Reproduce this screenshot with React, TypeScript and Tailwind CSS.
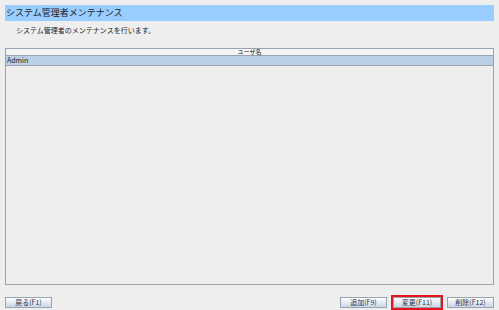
export default function App() {
	return (
		<div
			className="flex h-[310px] w-[499px] flex-col bg-[#eeeeee] text-[#222]"
			style={{ fontFamily: '"Noto Sans CJK JP", "DejaVu Sans", sans-serif' }}>
			<div className="mx-[5px] mt-[5px] flex h-[16px] items-center bg-[#99ccff] pl-[1px] text-[9px] leading-none text-[#222]">
				システム管理者メンテナンス
			</div>
			<div className="mt-[3px] h-[12px] pl-[16px] text-[7px] leading-[12px]">
				システム管理者のメンテナンスを行います。
			</div>
			<div className="mx-[5px] mt-[12px] flex h-[238px] flex-col border border-[#98a4b0] bg-[#eeeeee]">
				<div className="flex h-[7px] items-center justify-center border-b border-[#98a4b0] bg-[#f4f4f4] text-[6px] leading-none">
					ユーザ名
				</div>
				<div className="flex h-[10px] items-center border-b border-[#a8a0b0] bg-[#b8cfe6] pl-[1px] text-[7px] leading-none">
					Admin
				</div>
			</div>
			<div className="mx-[5px] mt-[10px] flex items-center">
				<Btn label="戻る(F1)" w="w-[47px]" />
				<div className="ml-auto flex items-center gap-[4px]">
					<Btn label="追加(F9)" w="w-[47px]" />
					<div className="border-2 border-[#e8141c]">
						<Btn label="変更(F11)" w="w-[48px]" />
					</div>
					<Btn label="削除(F12)" w="w-[47px]" />
				</div>
			</div>
		</div>
	);
}

function Btn({ label, w }: { label: string; w: string }) {
	return (
		<div
			className={`${w} flex h-[11px] items-center justify-center border border-[#98a4b0] bg-gradient-to-b from-[#ffffff] to-[#c8d6e6] text-[7px] leading-none text-[#334]`}>
			{label}
		</div>
	);
}
